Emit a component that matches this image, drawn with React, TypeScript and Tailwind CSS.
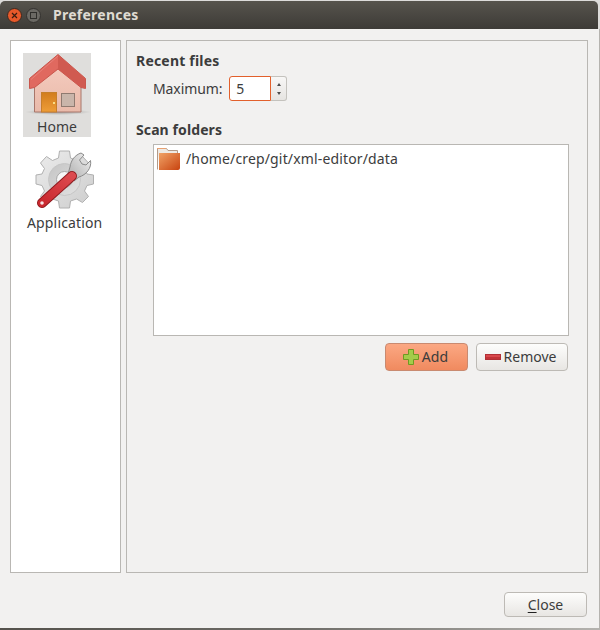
import React from "react";

function HomeIcon() {
  return (
    <svg width="68" height="68" viewBox="0 0 68 68" className="block">
      <defs>
        <linearGradient id="wall" x1="0" y1="0" x2="0" y2="1">
          <stop offset="0" stopColor="#f4cabd" />
          <stop offset="1" stopColor="#e9baaa" />
        </linearGradient>
        <linearGradient id="door" x1="0" y1="0" x2="0" y2="1">
          <stop offset="0" stopColor="#d27c1e" />
          <stop offset="1" stopColor="#ee9d38" />
        </linearGradient>
        <radialGradient id="shadow">
          <stop offset="0" stopColor="#000" stopOpacity="0.3" />
          <stop offset="1" stopColor="#000" stopOpacity="0" />
        </radialGradient>
      </defs>
      <ellipse cx="35" cy="59" rx="33" ry="3" fill="url(#shadow)" />
      <path d="M11.5 33 L35 14 L58 33 V59 H11.5 Z" fill="url(#wall)" stroke="#a8766a" strokeWidth="1" />
      <path d="M35 1.5 L62.5 25.5 V35.5 L58 34.5 L35 16 L11.5 34.5 L6.5 35.5 V25.5 Z" fill="#e0695f" stroke="#c9564c" strokeWidth="1" strokeLinejoin="round" />
      <path d="M35 2 L62 25.5 V35 L58 34 L35 16 Z" fill="#d05a50" />
      <path d="M35 3 L8 26.5" stroke="#e98078" strokeWidth="1" />
      <rect x="18.5" y="39.5" width="15" height="19.5" fill="url(#door)" stroke="#c67f2b" />
      <rect x="30" y="49" width="2" height="2" fill="#f8dc85" />
      <rect x="38.5" y="40.5" width="13" height="13" fill="#c9b5aa" stroke="#8f7a70" strokeWidth="1" />
    </svg>
  );
}

function AppIcon() {
  return (
    <svg width="60" height="60" viewBox="0 0 60 60" className="block">
      <defs>
        <linearGradient id="gear" x1="0" y1="0" x2="1" y2="1">
          <stop offset="0" stopColor="#ececec" />
          <stop offset="1" stopColor="#cdcdcd" />
        </linearGradient>
        <linearGradient id="ring" x1="0" y1="0" x2="1" y2="1">
          <stop offset="0" stopColor="#c4c4c4" />
          <stop offset="1" stopColor="#e2e2e2" />
        </linearGradient>
        <linearGradient id="wrench" x1="0" y1="1" x2="1" y2="0">
          <stop offset="0" stopColor="#c9282e" />
          <stop offset="1" stopColor="#dc4a4f" />
        </linearGradient>
        <linearGradient id="head" x1="0" y1="1" x2="1" y2="0">
          <stop offset="0" stopColor="#aaaaaa" />
          <stop offset="1" stopColor="#f2f2f2" />
        </linearGradient>
      </defs>
      <g transform="translate(0.5 -1)">
        <path
          d="M24 2 H34 L35 9 L41 11.5 L47 7.5 L53 14 L49 19.5 L51.5 25 L58 26 V35 L51.5 36.5 L49 42 L53 47.5 L47 53.5 L41 50 L35 52 L34 59 H24 L23 52 L17 50 L11 53.5 L5 47.5 L9 42 L6.5 36.5 L0.5 35 V26 L6.5 25 L9 19.5 L5 14 L11 7.5 L17 11.5 L23 9 Z"
          fill="url(#gear)"
          stroke="#b0b0b0"
          strokeWidth="1"
          strokeLinejoin="round"
        />
        <circle cx="29" cy="30.5" r="16" fill="url(#ring)" stroke="#c6c6c6" />
        <circle cx="29" cy="30.5" r="8" fill="#f6f6f6" stroke="#a8a8a8" />
      </g>
      <path
        d="M35 17 C36 10 40 5 46 3 L49 5 L44.5 10 L47 14 L51 15 L55.5 10.5 C57 18 51 25 44 27 L39 31 L33 24 Z"
        fill="url(#head)"
        stroke="#8a8a8a"
        strokeWidth="1"
        strokeLinejoin="round"
      />
      <path d="M7 53 L37 26" stroke="#8e1a1e" strokeWidth="10" strokeLinecap="round" />
      <path d="M7 53 L37 26" stroke="url(#wrench)" strokeWidth="8" strokeLinecap="round" />
      <circle cx="7" cy="53" r="1.8" fill="#f6e4e4" />
    </svg>
  );
}

function FolderIcon() {
  return (
    <svg width="24" height="22" viewBox="0 0 24 22" className="block">
      <defs>
        <linearGradient id="folder" x1="0" y1="0" x2="1" y2="1">
          <stop offset="0" stopColor="#f0a266" />
          <stop offset="1" stopColor="#c8430f" />
        </linearGradient>
      </defs>
      <path d="M1.5 21.5 V0.5 H10.5 L12 2.5 H21.5 V6 H3" fill="#eee9e3" stroke="#b39a88" />
      <path d="M1 0.5 H10" stroke="#e8a070" />
      <path d="M3 5 H24 V20 Q24 22 22 22 H3 Z" fill="url(#folder)" />
    </svg>
  );
}

function PlusIcon() {
  return (
    <svg width="16" height="16" viewBox="0 0 16 16" className="block">
      <path
        d="M5.5 0.5 H10.5 V5.5 H15.5 V10.5 H10.5 V15.5 H5.5 V10.5 H0.5 V5.5 H5.5 Z"
        fill="#a4cc4a"
        stroke="#6f9a22"
      />
    </svg>
  );
}

function MinusIcon() {
  return (
    <svg width="16" height="6" viewBox="0 0 16 6" className="block">
      <rect x="0.5" y="0.5" width="15" height="5" fill="#d9484c" stroke="#b23035" />
      <rect x="1" y="3" width="14" height="2" fill="#c23338" />
    </svg>
  );
}

export default function App() {
  return (
    <div className="w-[600px] h-[630px] flex flex-col overflow-hidden bg-[#dddcda] text-[14px] text-[#3c3c3c] font-['Noto_Sans','Open_Sans',sans-serif]">
      {/* Title bar */}
      <div className="h-[28px] mt-px mr-[2px] shrink-0 flex items-center pl-[7px] rounded-t-[5px] bg-gradient-to-b from-[#57544d] to-[#3d3b37]">
        <div className="w-[15px] h-[15px] rounded-full bg-[#e8592a] border border-[#3a2a22] flex items-center justify-center text-[#3a1d10]">
          <svg width="7" height="7" viewBox="0 0 7 7">
            <path d="M1 1 L6 6 M6 1 L1 6" stroke="currentColor" strokeWidth="1.2" />
          </svg>
        </div>
        <div className="w-[15px] h-[15px] ml-[4px] rounded-full bg-[#6b6964] border border-[#34322f] flex items-center justify-center">
          <div className="w-[7px] h-[7px] border border-[#2f2e2b]" />
        </div>
        <div className="ml-[12px] text-[14px] font-bold tracking-[0.25px] text-[#dfdbd2] leading-none">Preferences</div>
      </div>

      {/* Body */}
      <div className="flex-1 flex flex-col bg-[#f2f1f0] pt-[11px] pl-[10px] pr-[11px] border-r border-[#b5b3af]">
        <div className="flex gap-[5px] h-[533px]">
          {/* Sidebar */}
          <div className="w-[111px] shrink-0 bg-white border border-[#b9b7b3] pt-[12px] pl-[12px] flex flex-col items-start">
            <div className="w-[68px] h-[84px] bg-[#dfdedc] flex flex-col items-center">
              <HomeIcon />
              <span className="leading-[16px] mt-[-2px]">Home</span>
            </div>
            <div className="flex flex-col items-center mt-[13px] ml-[4px]">
              <AppIcon />
              <span className="leading-[18px] mt-[4px] tracking-[0.15px]">Application</span>
            </div>
          </div>

          {/* Page */}
          <div className="flex-1 border border-[#b9b7b3] pl-[9px] pr-[18px] pt-[11px]">
            <div className="font-bold leading-[18px] tracking-[0.2px]">Recent files</div>
            <div className="flex items-center mt-[6px] ml-[17px]">
              <span className="tracking-[-0.1px]">Maximum:</span>
              <div className="flex ml-[7px] h-[25px]">
                <div className="w-[42px] bg-white border border-[#e2602c] rounded-l-[3px] pl-[6px] leading-[23px]">5</div>
                <div className="w-[16px] flex flex-col items-center justify-center gap-[6px] border border-l-0 border-[#c4c2bd] rounded-r-[3px] bg-gradient-to-b from-[#f8f7f6] to-[#e6e4e1]">
                  <div className="w-0 h-0 border-x-[2.5px] border-x-transparent border-b-[3px] border-b-[#4c4c4c]" />
                  <div className="w-0 h-0 border-x-[2.5px] border-x-transparent border-t-[3px] border-t-[#4c4c4c]" />
                </div>
              </div>
            </div>
            <div className="font-bold leading-[18px] mt-[20px] tracking-[0.1px]">Scan folders</div>
            <div className="ml-[17px] mt-[5px] h-[192px] bg-white border border-[#b9b7b3] pt-[3px] pl-[3px]">
              <div className="flex items-center gap-[6px] h-[22px]">
                <div className="ml-[-1px]">
                  <FolderIcon />
                </div>
                <span className="tracking-[0.15px] mb-[2px]">/home/crep/git/xml-editor/data</span>
              </div>
            </div>
            <div className="flex justify-end gap-[8px] mt-[7px] mr-[1px]">
              <button className="w-[83px] h-[28px] flex items-center justify-center gap-[3px] pr-[2px] rounded-[4px] border border-[#c98a70] bg-gradient-to-b from-[#fba883] to-[#f08a5f]">
                <PlusIcon />
                <span className="tracking-[0.1px] mb-[2px]">Add</span>
              </button>
              <button className="w-[92px] h-[28px] flex items-center justify-center gap-[3px] pr-[3px] rounded-[4px] border border-[#bdbab5] bg-gradient-to-b from-[#fdfdfc] to-[#e8e6e3]">
                <MinusIcon />
                <span className="mb-[2px]">Remove</span>
              </button>
            </div>
          </div>
        </div>

        {/* Footer */}
        <div className="flex justify-end mt-[19px] mr-[1px]">
          <button className="w-[83px] h-[25px] rounded-[4px] border border-[#bdbab5] bg-gradient-to-b from-[#fdfdfc] to-[#e8e6e3] leading-[22px]">
            <span className="underline underline-offset-2 decoration-[#222]">C</span>lose
          </button>
        </div>
      </div>
      <div className="h-[2px] shrink-0 bg-gradient-to-r from-[#55524c] via-[#6f6d68] to-[#b5b3af]" />
    </div>
  );
}
